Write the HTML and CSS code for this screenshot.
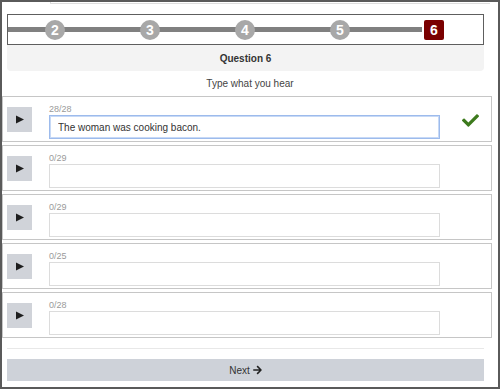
FILE: index.html
```html
<!DOCTYPE html>
<html lang="en">
<head>
    <meta charset="UTF-8">
    <meta name="viewport" content="width=device-width, initial-scale=1.0">
    <title>Question 6 - Type what you hear</title>
    <link rel="stylesheet" href="styles.css">
</head>
<body>
    <div class="frame">
        <div class="top-strip"></div>

        <div class="quiz-head">
            <div class="stepper">
                <span class="step">2</span>
                <span class="step">3</span>
                <span class="step">4</span>
                <span class="step">5</span>
                <span class="step current">6</span>
            </div>
            <div class="question-title">Question 6</div>
        </div>

        <p class="prompt">Type what you hear</p>

        <div class="items">
            <div class="item">
                <button class="play" aria-label="Play"><svg viewBox="0 0 10 10" width="8" height="9"><polygon points="0,0 10,5 0,10" /></svg></button>
                <div class="field">
                    <div class="count">28/28</div>
                    <input class="answer focused" type="text" value="The woman was cooking bacon." autofocus>
                </div>
                <div class="status">
                    <svg viewBox="0 0 512 512" width="17" height="17"><path fill="#3d7a1d" d="M173.898 439.404l-166.4-166.4c-9.997-9.997-9.997-26.206 0-36.204l36.203-36.204c9.997-9.998 26.207-9.998 36.204 0L192 312.690 432.095 72.596c9.997-9.997 26.207-9.997 36.204 0l36.203 36.204c9.997 9.997 9.997 26.206 0 36.204l-294.4 294.401c-9.998 9.997-26.207 9.997-36.204-.001z"/></svg>
                </div>
            </div>
            <div class="item">
                <button class="play" aria-label="Play"><svg viewBox="0 0 10 10" width="8" height="9"><polygon points="0,0 10,5 0,10" /></svg></button>
                <div class="field">
                    <div class="count">0/29</div>
                    <input class="answer" type="text">
                </div>
                <div class="status"></div>
            </div>
            <div class="item">
                <button class="play" aria-label="Play"><svg viewBox="0 0 10 10" width="8" height="9"><polygon points="0,0 10,5 0,10" /></svg></button>
                <div class="field">
                    <div class="count">0/29</div>
                    <input class="answer" type="text">
                </div>
                <div class="status"></div>
            </div>
            <div class="item">
                <button class="play" aria-label="Play"><svg viewBox="0 0 10 10" width="8" height="9"><polygon points="0,0 10,5 0,10" /></svg></button>
                <div class="field">
                    <div class="count">0/25</div>
                    <input class="answer" type="text">
                </div>
                <div class="status"></div>
            </div>
            <div class="item">
                <button class="play" aria-label="Play"><svg viewBox="0 0 10 10" width="8" height="9"><polygon points="0,0 10,5 0,10" /></svg></button>
                <div class="field">
                    <div class="count">0/28</div>
                    <input class="answer" type="text">
                </div>
                <div class="status"></div>
            </div>
        </div>

        <div class="footer">
            <hr class="divider">
            <button class="next">Next <svg viewBox="0 0 448 512" width="9" height="10"><path fill="#222" d="M190.5 66.9l22.2-22.2c9.4-9.4 24.6-9.4 33.9 0L441 239c9.4 9.4 9.4 24.6 0 33.9L246.6 467.3c-9.4 9.4-24.6 9.4-33.9 0l-22.2-22.2c-9.5-9.5-9.3-25 .4-34.3L311.4 296H24c-13.3 0-24-10.7-24-24v-32c0-13.3 10.7-24 24-24h287.4L190.9 101.2c-9.8-9.3-10-24.8-.4-34.3z"/></svg></button>
        </div>
    </div>

    <script>
        // put the caret after the typed answer
        var first = document.querySelector('.answer.focused');
        first.focus();
        first.setSelectionRange(first.value.length, first.value.length);
    </script>
</body>
</html>
```

FILE: styles.css
```css
* {
    box-sizing: border-box;
}
body {
    margin: 0;
    font-family: "Liberation Sans", Arial, sans-serif;
    color: #333;
    background: #fff;
}
.frame {
    width: 500px;
    height: 389px;
    border: 2px solid #5a5a5a;
    overflow: hidden;
}
.top-strip {
    margin-left: 48px;
    width: 440px;
    height: 2px;
    border-left: 1px solid #ddd;
    border-bottom: 1px solid #ddd;
}

/* stepper + title */
.quiz-head {
    margin: 10px 14px 0 5px;
}
.stepper {
    display: flex;
    align-items: center;
    gap: 75px;
    height: 31px;
    padding-left: 37px;
    border: 1px solid #5e5e5e;
    background: linear-gradient(#808080, #808080) no-repeat 0 center / 414px 5px;
}
.step {
    width: 20px;
    height: 20px;
    border-radius: 50%;
    background: #a8a8a8;
    color: #fff;
    font-weight: bold;
    font-size: 14px;
    line-height: 20px;
    text-align: center;
}
.step.current {
    margin-left: -1px;
    border-radius: 2px;
    background: #7a0000;
}
.question-title {
    height: 26px;
    padding-top: 1px;
    line-height: 26px;
    background: #f3f3f3;
    border-radius: 0 0 4px 4px;
    text-align: center;
    font-weight: bold;
    font-size: 10px;
    color: #333;
}
.prompt {
    margin: 6px 0 5px;
    line-height: 14px;
    font-size: 10px;
    text-align: center;
    color: #444;
}

/* answer rows */
.items {
    display: flex;
    flex-direction: column;
    gap: 3px;
    margin-right: 6px;
}
.item {
    display: flex;
    align-items: center;
    height: 46px;
    padding-left: 4px;
    border: 1px solid #c6c6c6;
}
.play {
    display: flex;
    align-items: center;
    justify-content: center;
    width: 25px;
    height: 25px;
    margin: 0 17px 0 0;
    padding: 0;
    border: none;
    background: #d0d3d9;
    cursor: pointer;
}
.play svg {
    fill: #1e1e1e;
}
.field {
    width: 391px;
    padding-top: 7px;
    align-self: flex-start;
}
.count {
    height: 11px;
    line-height: 11px;
    font-size: 9px;
    color: #9a9a9a;
}
.answer {
    display: block;
    width: 100%;
    height: 24px;
    padding: 0 8px;
    border: 1px solid #dcdcdc;
    font-family: inherit;
    font-size: 10px;
    color: #333;
    outline: none;
}
.answer.focused {
    border-color: #9dbbec;
    box-shadow: inset 0 0 0 1px #c7d9f6;
}
.status {
    margin-left: 22px;
    display: flex;
    padding-top: 2px;
}

/* footer */
.footer {
    margin: 0 14px 0 5px;
}
.divider {
    margin: 10px 0 10px;
    border: none;
    border-top: 1px solid #e8e8e8;
}
.next {
    display: block;
    width: 100%;
    height: 22px;
    border: none;
    background: #ced2d9;
    font-family: inherit;
    font-size: 10px;
    color: #333;
    cursor: pointer;
}
.next svg {
    vertical-align: -1px;
}
```
